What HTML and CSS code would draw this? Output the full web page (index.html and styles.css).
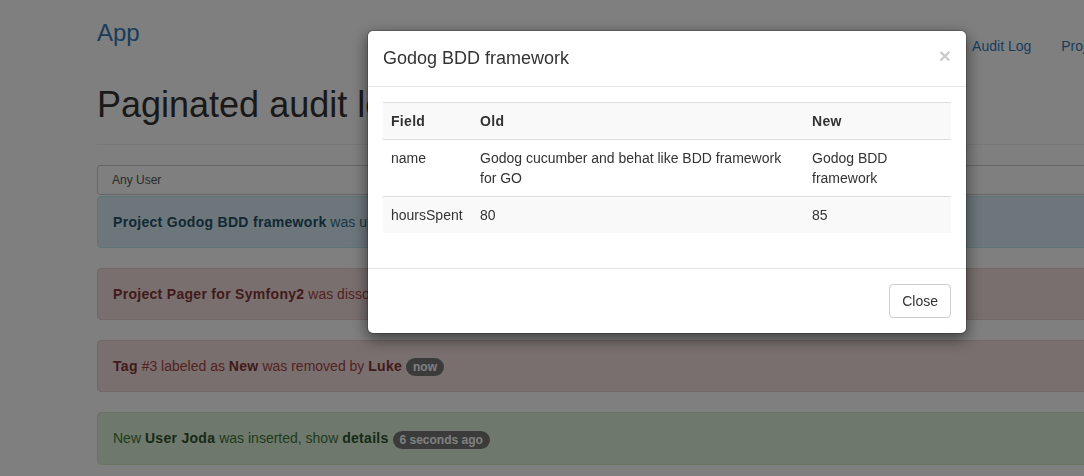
FILE: index.html
```html
<!DOCTYPE html>
<html>
<head>
<meta charset="utf-8">
<title>Paginated audit log</title>
<link rel="stylesheet" href="styles.css">
</head>
<body>
<div class="page">
  <nav class="navbar">
    <div class="container navbar-inner">
      <a class="navbar-brand" href="#">App</a>
      <ul class="nav">
        <li><a href="#">Audit Log</a></li>
        <li><a href="#">Projects</a></li>
        <li><a href="#">Users</a></li>
        <li><a href="#">Tags</a></li>
      </ul>
    </div>
  </nav>
  <div class="container">
    <div class="page-header">
      <h1>Paginated audit log</h1>
    </div>
    <select class="user-select">
      <option>Any User</option>
    </select>
    <div class="alert alert-info">
      <b class="alert-link">Project Godog BDD framework</b> was updated by <b class="alert-link">Luke</b>, show <b class="alert-link">details</b> <span class="badge">12 seconds ago</span>
    </div>
    <div class="alert alert-danger">
      <b class="alert-link">Project Pager for Symfony2</b> was dissociated from <b class="alert-link">Tag</b> #3 by <b class="alert-link">Luke</b> <span class="badge">now</span>
    </div>
    <div class="alert alert-danger">
      <b class="alert-link">Tag</b> #3 labeled as <b class="alert-link">New</b> was removed by <b class="alert-link">Luke</b> <span class="badge">now</span>
    </div>
    <div class="alert alert-success">
      New <b class="alert-link">User Joda</b> was inserted, show <b class="alert-link">details</b> <span class="badge">6 seconds ago</span>
    </div>
  </div>
</div>

<div class="backdrop"></div>
<div class="modal">
  <div class="modal-dialog">
    <div class="modal-content">
      <div class="modal-header">
        <button type="button" class="close">&times;</button>
        <h4 class="modal-title">Godog BDD framework</h4>
      </div>
      <div class="modal-body">
        <table class="table">
          <colgroup>
            <col class="col-field">
            <col class="col-old">
            <col class="col-new">
          </colgroup>
          <tbody>
            <tr><th>Field</th><th>Old</th><th>New</th></tr>
            <tr><td>name</td><td>Godog cucumber and behat like BDD framework for GO</td><td>Godog BDD framework</td></tr>
            <tr><td>hoursSpent</td><td>80</td><td>85</td></tr>
          </tbody>
        </table>
      </div>
      <div class="modal-footer">
        <button type="button" class="btn">Close</button>
      </div>
    </div>
  </div>
</div>
</body>
</html>
```

FILE: styles.css
```css
html, body {
  margin: 0;
  padding: 0;
  overflow: hidden;
  height: 100%;
}
body {
  font-family: "Liberation Sans", Arial, Helvetica, sans-serif;
  font-size: 14px;
  line-height: 1.42857;
  color: #333;
  background: #fff;
}
.page {
  width: 1334px;
}
.container {
  width: 1170px;
  margin: 0 auto;
  padding: 0 15px;
  box-sizing: border-box;
}
.navbar {
  height: 70px;
}
.navbar-inner {
  display: flex;
  justify-content: space-between;
  align-items: flex-start;
}
.navbar-brand {
  display: block;
  font-size: 24px;
  line-height: 30px;
  padding-top: 18px;
  color: #337ab7;
  text-decoration: none;
}
.nav {
  list-style: none;
  margin: 0 -16px 0 0;
  padding: 36px 0 0;
  display: flex;
}
.nav a {
  display: block;
  padding: 0 15px;
  line-height: 20px;
  color: #337ab7;
  text-decoration: none;
}
.page-header {
  padding-top: 15px;
  padding-bottom: 9px;
  margin-bottom: 20px;
  border-bottom: 1px solid #eee;
}
.page-header h1 {
  margin: 0 0 10px;
  font-size: 36px;
  font-weight: 500;
  line-height: 1.1;
  color: #333;
}
.user-select {
  display: block;
  width: 100%;
  height: 30px;
  padding: 5px 10px;
  font-family: inherit;
  font-size: 12px;
  line-height: 1.5;
  color: #555;
  background: #fff;
  border: 1px solid #ccc;
  border-radius: 3px;
  margin: 0 0 1px;
}
.alert {
  padding: 15px;
  margin-bottom: 20px;
  border: 1px solid transparent;
  border-radius: 4px;
  line-height: 20px;
}
.alert-link {
  font-weight: bold;
  letter-spacing: 0.3px;
}
.alert-info {
  background: #d9edf7;
  border-color: #bce8f1;
  color: #31708f;
}
.alert-info .alert-link { color: #245269; }
.alert-danger {
  background: #f2dede;
  border-color: #ebccd1;
  color: #a94442;
}
.alert-danger .alert-link { color: #843534; }
.alert-success {
  background: #dff0d8;
  border-color: #d6e9c6;
  color: #3c763d;
}
.alert-success .alert-link { color: #2b542c; }
.badge {
  display: inline-block;
  min-width: 10px;
  padding: 3px 7px;
  font-size: 12px;
  font-weight: bold;
  line-height: 1;
  color: #fff;
  text-align: center;
  white-space: nowrap;
  vertical-align: middle;
  background: #777;
  border-radius: 10px;
}
.backdrop {
  position: fixed;
  top: 0;
  left: 0;
  right: 0;
  bottom: 0;
  background: rgba(0, 0, 0, 0.5);
}
.modal {
  position: fixed;
  top: 0;
  left: 0;
  width: 1334px;
  bottom: 0;
}
.modal-dialog {
  width: 600px;
  margin: 30px auto;
}
.modal-content {
  background: #fff;
  border: 1px solid rgba(0, 0, 0, 0.2);
  border-radius: 6px;
  box-shadow: 0 5px 15px rgba(0, 0, 0, 0.5);
  background-clip: padding-box;
}
.modal-header {
  padding: 15px;
  border-bottom: 1px solid #e5e5e5;
}
.modal-title {
  margin: 0;
  font-size: 18px;
  font-weight: 500;
  line-height: 25px;
  color: #333;
}
.close {
  float: right;
  margin-top: -1px;
  padding: 0;
  background: transparent;
  border: 0;
  font-family: inherit;
  font-size: 21px;
  font-weight: bold;
  line-height: 1;
  color: #000;
  opacity: 0.2;
}
.modal-body {
  padding: 15px;
}
.table {
  width: 100%;
  border-collapse: collapse;
  border-spacing: 0;
  margin-bottom: 20px;
}
.col-field { width: 89px; }
.col-old { width: 332px; }
.col-new { width: 147px; }
.table th,
.table td {
  padding: 8px;
  line-height: 20px;
  text-align: left;
  vertical-align: top;
  border-top: 1px solid #ddd;
}
.table th {
  letter-spacing: 0.3px;
}
.table tr:nth-of-type(odd) {
  background: #f9f9f9;
}
.modal-footer {
  padding: 15px;
  text-align: right;
  border-top: 1px solid #e5e5e5;
}
.btn {
  display: inline-block;
  padding: 6px 12px;
  font-family: inherit;
  font-size: 14px;
  line-height: 20px;
  color: #333;
  background: #fff;
  border: 1px solid #ccc;
  border-radius: 4px;
}
```
